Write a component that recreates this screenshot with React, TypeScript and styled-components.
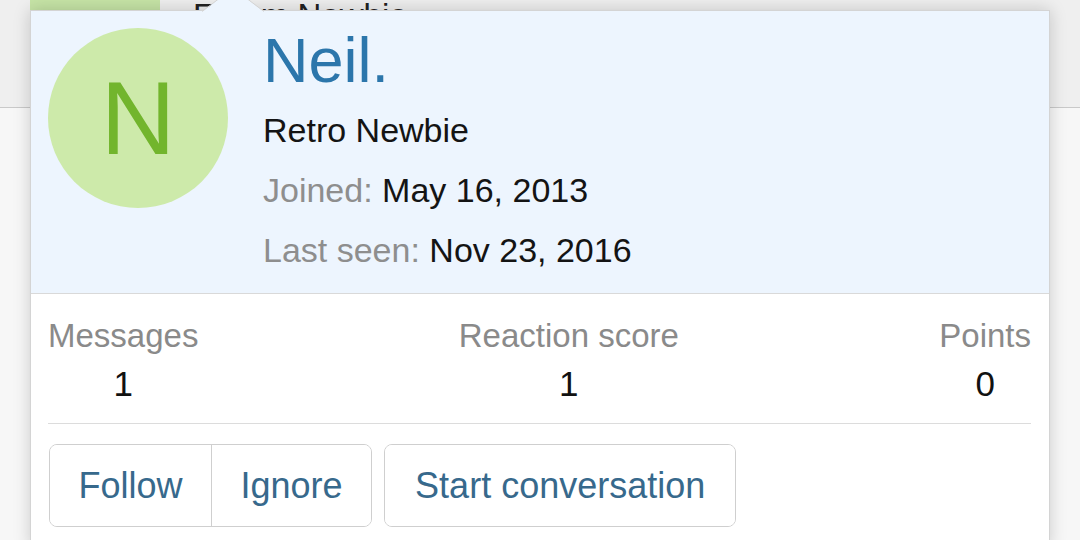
import React from "react";
import styled, { createGlobalStyle } from "styled-components";

const Global = createGlobalStyle`
  html, body {
    margin: 0;
    padding: 0;
    width: 1080px;
    height: 540px;
    overflow: hidden;
    background: #f7f7f7;
    font-family: "Liberation Sans", Arial, Helvetica, sans-serif;
  }
`;

const Page = styled.div`
  position: relative;
  width: 1080px;
  height: 540px;
  overflow: hidden;
`;

const BackRow = styled.div`
  display: flex;
  align-items: flex-start;
  gap: 33px;
  height: 108px;
  padding-left: 30px;
  background: #efefef;
  border-bottom: 1px solid #c9c9c9;
  box-sizing: border-box;
  overflow: hidden;
`;

const BackAvatar = styled.div`
  width: 130px;
  height: 150px;
  margin-top: -120px;
  background: #c6e4a6;
  color: #6fae2c;
  font-size: 96px;
  line-height: 150px;
  text-align: center;
  flex: none;
`;

const BackText = styled.div`
  margin-top: -4px;
  font-size: 33px;
  line-height: 40px;
  color: #222;
`;

const Card = styled.div`
  position: absolute;
  left: 30px;
  top: 10px;
  width: 1020px;
  background: #fff;
  border: 1px solid #d4d4d4;
  box-sizing: border-box;
  box-shadow: 0 0 16px rgba(0, 0, 0, 0.18);
`;

const Arrow = styled.svg`
  position: absolute;
  left: 171px;
  top: -24px;
  display: block;
`;

const Header = styled.div`
  display: flex;
  align-items: flex-start;
  gap: 35px;
  padding: 13px 17px 13px;
  background: #edf5fe;
  border-bottom: 1px solid #d9d9d9;
`;

const Avatar = styled.div`
  width: 180px;
  height: 180px;
  margin-top: 4px;
  border-radius: 50%;
  background: #cdeaaa;
  color: #72b52d;
  font-size: 104px;
  line-height: 180px;
  text-align: center;
  flex: none;
`;

const Info = styled.div`
  display: flex;
  flex-direction: column;
`;

const Name = styled.div`
  font-size: 63px;
  line-height: 72px;
  color: #2c76ab;
  margin-bottom: 4px;
`;

const Line = styled.div`
  font-size: 34px;
  line-height: 60px;
  color: #141414;
  white-space: nowrap;
`;

const Muted = styled.span`
  color: #8e8e8e;
`;

const Body = styled.div`
  padding: 0 18px 0 17px;
`;

const Stats = styled.div`
  display: flex;
  justify-content: space-between;
  padding: 22px 0 19px;
  border-bottom: 1px solid #dcdcdc;
`;

const Stat = styled.div`
  display: flex;
  flex-direction: column;
  align-items: center;
`;

const StatLabel = styled.div`
  font-size: 33px;
  line-height: 40px;
  color: #8a8a8a;
`;

const StatValue = styled.div`
  margin-top: 8px;
  font-size: 35px;
  line-height: 40px;
  color: #111;
`;

const Actions = styled.div`
  display: flex;
  gap: 12px;
  padding: 20px 0 20px 1px;
`;

const Group = styled.div`
  display: flex;
  border: 1px solid #cfcfcf;
  border-radius: 8px;
  background: #fff;
  overflow: hidden;
`;

const Button = styled.div<{ $divider?: boolean; $wide?: boolean }>`
  font-size: 36px;
  line-height: 81px;
  padding: 0 ${(p) => (p.$wide ? "30px" : "28.5px")};
  color: #37698c;
  background: #fff;
  white-space: nowrap;
  border-left: ${(p) => (p.$divider ? "1px solid #cfcfcf" : "none")};
`;

export default function App() {
  return (
    <Page>
      <Global />
      <BackRow>
        <BackAvatar>N</BackAvatar>
        <BackText>Forum Newbie</BackText>
      </BackRow>
      <Card>
        <Arrow width="62" height="25" viewBox="0 0 62 25">
          <polygon points="0,25 31,1 62,25" fill="#edf5fe" />
          <polyline points="0,24.5 31,1 62,24.5" fill="none" stroke="#d4d4d4" strokeWidth="1" />
        </Arrow>
        <Header>
          <Avatar>N</Avatar>
          <Info>
            <Name>Neil.</Name>
            <Line>Retro Newbie</Line>
            <Line>
              <Muted>Joined:</Muted> May 16, 2013
            </Line>
            <Line>
              <Muted>Last seen:</Muted> Nov 23, 2016
            </Line>
          </Info>
        </Header>
        <Body>
          <Stats>
            <Stat>
              <StatLabel>Messages</StatLabel>
              <StatValue>1</StatValue>
            </Stat>
            <Stat>
              <StatLabel>Reaction score</StatLabel>
              <StatValue>1</StatValue>
            </Stat>
            <Stat>
              <StatLabel>Points</StatLabel>
              <StatValue>0</StatValue>
            </Stat>
          </Stats>
          <Actions>
            <Group>
              <Button>Follow</Button>
              <Button $divider>Ignore</Button>
            </Group>
            <Group>
              <Button $wide>Start conversation</Button>
            </Group>
          </Actions>
        </Body>
      </Card>
    </Page>
  );
}
